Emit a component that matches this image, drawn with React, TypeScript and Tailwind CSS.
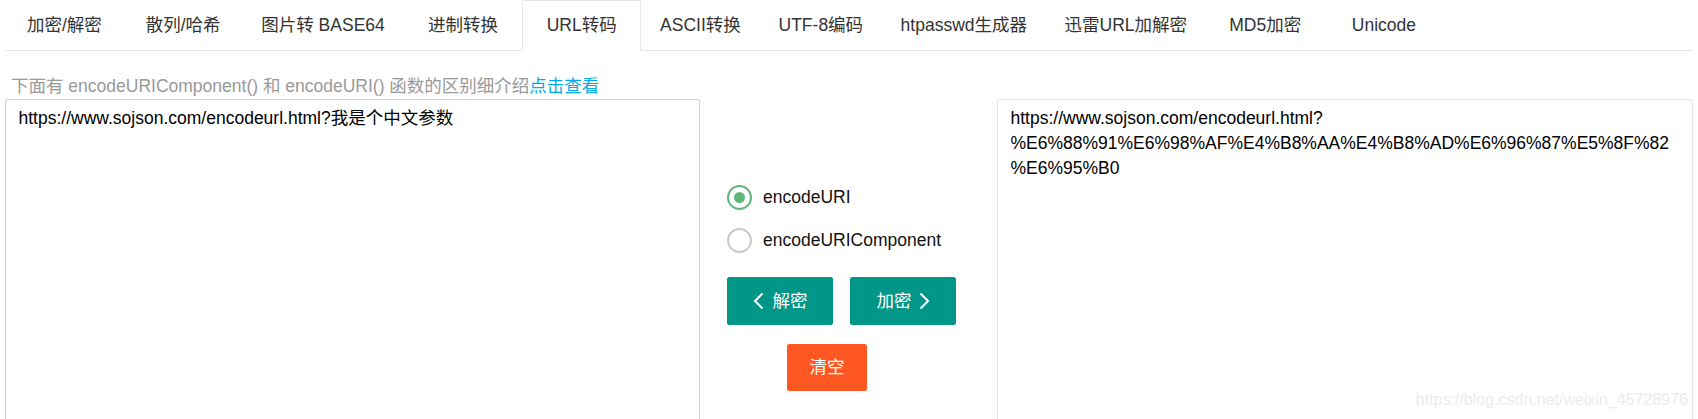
import React, { useState } from 'react';

const tabs = [
  '加密/解密',
  '散列/哈希',
  '图片转 BASE64',
  '进制转换',
  'URL转码',
  'ASCII转换',
  'UTF-8编码',
  'htpasswd生成器',
  '迅雷URL加解密',
  'MD5加密',
  'Unicode',
];

const encodedLines = [
  'https://www.sojson.com/encodeurl.html?',
  '%E6%88%91%E6%98%AF%E4%B8%AA%E4%B8%AD%E6%96%87%E5%8F%82',
  '%E6%95%B0',
];

// Layui style radio circle
const Radio = ({ checked, label, onClick }: { checked: boolean; label: string; onClick: () => void }) => (
  <div className="flex h-[43px] items-center cursor-pointer" onClick={onClick}>
    <span
      className={`flex h-[25px] w-[25px] items-center justify-center rounded-full border-2 ${
        checked ? 'border-[#5fb878]' : 'border-[#c9c9c9]'
      }`}
    >
      {checked && <span className="h-[11px] w-[11px] rounded-full bg-[#5fb878]" />}
    </span>
    <span className="ml-[11px] text-[17.5px] leading-[25px] text-[#111]">{label}</span>
  </div>
);

const Chevron = ({ dir }: { dir: 'left' | 'right' }) => (
  <svg width="11" height="18" viewBox="0 0 11 18" fill="none">
    <polyline
      points={dir === 'left' ? '9.5,1.5 2,9 9.5,16.5' : '1.5,1.5 9,9 1.5,16.5'}
      stroke="#fff"
      strokeWidth="2"
      strokeLinejoin="miter"
    />
  </svg>
);

export default function App() {
  const [mode, setMode] = useState<'uri' | 'component'>('uri');
  const active = 4;

  return (
    <div className="relative h-[419px] w-full overflow-hidden bg-white font-['Liberation_Sans','Noto_Sans_CJK_SC',sans-serif]">
      <div className="px-[5px]">
        {/* Tabs */}
        <ul className="flex h-[51px] items-start border-b border-[#e6e6e6]">
          {tabs.map((t, i) => (
            <li
              key={t}
              className={`min-w-[118.75px] px-[18.75px] text-center text-[17.5px] text-[#333] whitespace-nowrap ${
                i === active
                  ? 'h-[51px] rounded-t-[2px] border-x border-t border-b border-x-[#e6e6e6] border-t-[#e6e6e6] border-b-white bg-white leading-[49px]'
                  : 'h-[50px] leading-[50px]'
              }`}
            >
              {t}
            </li>
          ))}
        </ul>

        {/* Description */}
        <div className="mt-[23px] pl-[6px] text-[17.5px] leading-[25px] text-[#999]">
          下面有 encodeURIComponent() 和 encodeURI() 函数的区别细介绍
          <span className="text-[#01aaed]">点击查看</span>
        </div>

        <div className="flex">
          {/* Source */}
          <textarea
            className="h-[330px] w-[695px] shrink-0 resize-none rounded-[2px] border border-[#d2d2d2] px-[12.5px] py-[6px] text-[17.5px] leading-[25px] text-black outline-none font-['Liberation_Sans','Noto_Sans_CJK_SC',sans-serif]"
            defaultValue="https://www.sojson.com/encodeurl.html?我是个中文参数"
          />

          {/* Controls */}
          <div className="flex flex-1 flex-col pl-[27px] pt-[77px]">
            <Radio checked={mode === 'uri'} label="encodeURI" onClick={() => setMode('uri')} />
            <Radio checked={mode === 'component'} label="encodeURIComponent" onClick={() => setMode('component')} />
            <div className="mt-[15px] flex gap-[17px]">
              <button className="flex h-[47.5px] w-[106px] items-center justify-center gap-[9px] rounded-[2.5px] bg-[#009688] text-[17.5px] text-white">
                <Chevron dir="left" />
                <span>解密</span>
              </button>
              <button className="flex h-[47.5px] w-[106px] items-center justify-center gap-[7px] rounded-[2.5px] bg-[#009688] text-[17.5px] text-white">
                <span>加密</span>
                <Chevron dir="right" />
              </button>
            </div>
            <button className="ml-[60px] mt-[19px] h-[47px] w-[80px] rounded-[2.5px] bg-[#ff5722] text-[17.5px] text-white">
              清空
            </button>
          </div>

          {/* Result */}
          <div className="h-[330px] w-[696px] shrink-0 rounded-[2px] border border-[#e6e6e6] px-[12.5px] py-[6px] text-[17.5px] leading-[25px] text-black">
            {encodedLines.map((l) => (
              <div key={l}>{l}</div>
            ))}
          </div>
        </div>
      </div>

      {/* Watermark */}
      <div className="absolute right-[10px] top-[391px] text-[16px] leading-[18px] text-[#ececec]">
        https://blog.csdn.net/weixin_45728976
      </div>
    </div>
  );
}
